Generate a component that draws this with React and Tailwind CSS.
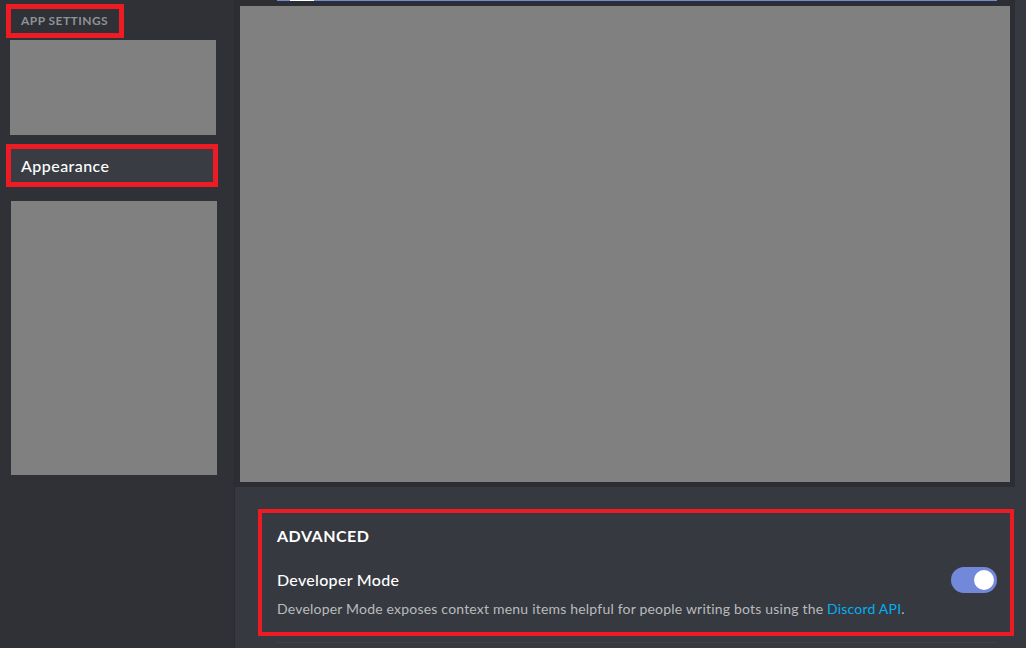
export default function App() {
  return (
    <div
      className="flex h-[648px] w-[1026px] overflow-hidden bg-[#36393f]"
      style={{ fontFamily: "Lato, 'Open Sans', sans-serif" }}
    >
      {/* Sidebar */}
      <div className="w-[235px] shrink-0 bg-[#2f3136] pt-[4px] pl-[6px] border-r border-[#2a2c30]">
        <div className="flex h-[34px] w-[118px] items-center border-[5px] border-[#ed1c24] pl-[10px]">
          <span className="text-[12px] font-bold uppercase tracking-[0.45px] text-[#8e9297]">
            App Settings
          </span>
        </div>
        <div className="mt-[2px] ml-[4px] h-[95px] w-[206px] bg-[#808080]" />
        <div className="mt-[9px] h-[43px] w-[212px] border-[5px] border-[#ed1c24]">
          <div className="flex h-full items-center bg-[#393c43] pl-[10px]">
            <span className="text-[16px] font-medium tracking-[0.45px] text-white">Appearance</span>
          </div>
        </div>
        <div className="mt-[14px] ml-[5px] h-[274px] w-[206px] bg-[#808080]" />
      </div>

      {/* Main */}
      <div className="flex flex-1 flex-col">
        <div className="flex h-[487px] w-[780px] flex-col bg-[#2c2e33]">
          <div className="ml-[42px] flex h-[1px] w-[720px] bg-[#7289da]">
            <div className="ml-[13px] h-full w-[24px] bg-white" />
          </div>
          <div className="mt-[5px] ml-[5px] h-[476px] w-[770px] bg-[#808080]" />
        </div>

        <div className="pt-[22px] pl-[23px]">
          <div className="h-[127px] w-[756px] border-[4px] border-[#ed1c24] pl-[15px] pr-[13px] pt-[13px]">
            <h2 className="text-[16px] font-bold uppercase leading-[20px] tracking-[0.5px] text-white">
              Advanced
            </h2>
            <div className="mt-[21px] flex h-[26px] items-center justify-between">
              <span className="text-[16px] font-medium tracking-[0.3px] text-white">Developer Mode</span>
              <div className="flex h-[26px] w-[46px] items-center justify-end rounded-full bg-[#7289da] pr-[3px]">
                <div className="h-[20px] w-[20px] rounded-full bg-white" />
              </div>
            </div>
            <p className="mt-[7px] text-[14px] leading-[18px] tracking-[0.2px] text-[#b9bbbe]">
              Developer Mode exposes context menu items helpful for people writing bots using the{" "}
              <span className="text-[#00b0f4]">Discord API</span>.
            </p>
          </div>
          <div className="mt-[6px] ml-[19px] h-[1px] w-[720px] bg-[#3f4248]" />
        </div>
      </div>
    </div>
  );
}
